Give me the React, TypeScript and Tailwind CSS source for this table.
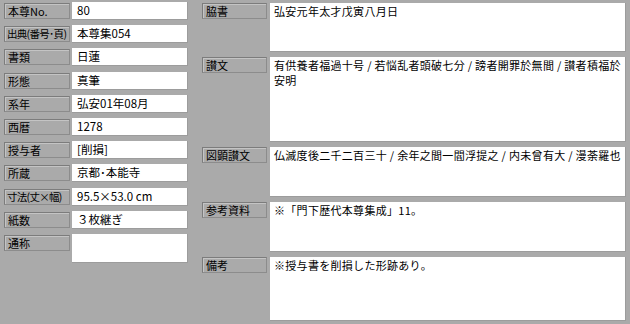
import React from "react";

const font = {
  fontFamily: '"MS PGothic", "Noto Sans CJK JP", "Noto Sans", sans-serif',
};

type Field = { label: string; value: string; tall?: boolean; tight?: boolean };

const leftFields: Field[] = [
  { label: "本尊No.", value: "80" },
  { label: "出典(番号･頁)", value: "本尊集054", tight: true },
  { label: "書類", value: "日蓮" },
  { label: "形態", value: "真筆" },
  { label: "系年", value: "弘安01年08月" },
  { label: "西暦", value: "1278" },
  { label: "授与者", value: "[削損]" },
  { label: "所蔵", value: "京都･本能寺" },
  { label: "寸法(丈×幅)", value: "95.5×53.0 cm", tight: true },
  { label: "紙数", value: "３枚継ぎ" },
  { label: "通称", value: "", tall: true },
];

type Block = { label: string; lines: string[]; h: string };

const rightBlocks: Block[] = [
  { label: "脇書", lines: ["弘安元年太才戊寅八月日"], h: "h-[49px]" },
  {
    label: "讃文",
    lines: [
      "有供養者福過十号 / 若悩乱者頭破七分 / 謗者開罪於無間 / 讃者積福於",
      "安明",
    ],
    h: "h-[85px]",
  },
  {
    label: "図顕讃文",
    lines: ["仏滅度後二千二百三十 / 余年之間一閻浮提之 / 内未曾有大 / 漫荼羅也"],
    h: "h-[50px]",
  },
  { label: "参考資料", lines: ["※「門下歴代本尊集成」11。"], h: "h-[50px]" },
  { label: "備考", lines: ["※授与書を削損した形跡あり。"], h: "h-[64px]" },
];

function Label({ text, w, tight }: { text: string; w: string; tight?: boolean }) {
  return (
    <div
      className={`${w} h-[16px] shrink-0 border border-t-[#7c7c7c] border-l-[#7c7c7c] border-b-[#8c8c8c] border-r-[#8c8c8c] shadow-[inset_1px_1px_0_#c4c4c4] text-black whitespace-nowrap overflow-hidden leading-[14px] ${tight ? "pl-[2px] text-[10.5px] tracking-[-0.7px]" : "pl-[3px] text-[11px]"}`}
    >
      {text}
    </div>
  );
}

export default function App() {
  return (
    <div
      className="w-[630px] h-[324px] bg-[#aaaaaa] flex text-black overflow-hidden"
      style={font}
    >
      {/* left column: short single-line fields */}
      <div className="flex flex-col gap-[5.2px] pl-[4px] pt-[2px] w-[198px]">
        {leftFields.map((f) => (
          <div key={f.label} className="flex items-start gap-[2px]">
            <div className="mt-[1px]">
              <Label text={f.label} w="w-[66px]" tight={f.tight} />
            </div>
            <div
              className={`w-[116px] ${f.tall ? "h-[29px]" : "h-[18px]"} bg-white border-b border-r border-[#9c9c9c] pl-[5px] text-[11.5px] leading-[17px] whitespace-nowrap`}
            >
              {f.value}
            </div>
          </div>
        ))}
      </div>

      {/* right column: multi-line text blocks */}
      <div className="flex flex-col gap-[5px] pt-[3px] pl-[4px]">
        {rightBlocks.map((b) => (
          <div key={b.label} className="flex items-start gap-[3px]">
            <Label text={b.label} w="w-[65px]" />
            <div
              className={`w-[356px] ${b.h} bg-white border-b border-r border-[#9c9c9c] pl-[4px] pt-[1px] text-[11px] leading-[15px] tracking-[0.3px] whitespace-nowrap overflow-hidden`}
            >
              {b.lines.map((l, i) => (
                <div key={i}>{l}</div>
              ))}
            </div>
          </div>
        ))}
      </div>
    </div>
  );
}
